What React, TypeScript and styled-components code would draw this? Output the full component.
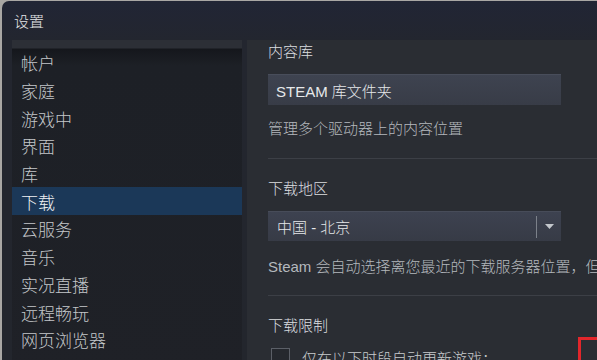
import React from "react";
import styled, { createGlobalStyle } from "styled-components";

const Global = createGlobalStyle`
  html, body { margin: 0; padding: 0; }
  body {
    width: 597px;
    height: 360px;
    overflow: hidden;
    background: #a9a7a4;
    font-family: "Liberation Sans", "Noto Sans CJK SC", sans-serif;
    font-weight: 300;
  }
`;

const Window = styled.div`
  position: relative;
  margin: 1px 0 0 2px;
  height: 359px;
  border-top-left-radius: 7px;
  overflow: hidden;
  background: linear-gradient(to bottom, #212535 0px, #23262f 40px, #23262d 100%);
  display: flex;
  flex-direction: column;
`;

const TitleBar = styled.div`
  height: 39px;
  flex: none;
  display: flex;
  align-items: center;
  padding-left: 12px;
  color: #e4e6e8;
  font-size: 15px;
`;

const Body = styled.div`
  flex: 1;
  display: grid;
  grid-template-columns: 230px 1fr;
  column-gap: 5px;
  padding-left: 10px;
  min-height: 0;
`;

const Sidebar = styled.nav`
  background: linear-gradient(
    to bottom,
    #2c2f36 0px,
    #2c2f36 8px,
    #15171c 9px,
    #1d2026 26px,
    #1f2127 100%
  );
  padding-top: 9px;
  display: flex;
  flex-direction: column;
`;

const NavItem = styled.div<{ $active?: boolean }>`
  height: 27.7px;
  flex: none;
  display: flex;
  align-items: center;
  padding-left: 9px;
  font-size: 17px;
  color: ${(p) => (p.$active ? "#f0f2f4" : "#c4c7ca")};
  background: ${(p) => (p.$active ? "#1b3858" : "transparent")};
  white-space: nowrap;
`;

const Content = styled.main`
  background: #2a2d33;
  padding: 2px 0 0 21px;
  display: flex;
  flex-direction: column;
  overflow: hidden;
`;

const Label = styled.div<{ $gap?: number }>`
  height: 20px;
  line-height: 20px;
  font-size: 15px;
  color: #dcdee0;
  margin-top: ${(p) => p.$gap ?? 0}px;
  white-space: nowrap;
`;

const Description = styled.div<{ $gap: number }>`
  height: 20px;
  line-height: 20px;
  font-size: 15px;
  color: #b4b8bd;
  margin-top: ${(p) => p.$gap}px;
  white-space: nowrap;
`;

const FieldButton = styled.div<{ $gap: number }>`
  margin-top: ${(p) => p.$gap}px;
  width: 293px;
  height: 31px;
  box-sizing: border-box;
  display: flex;
  align-items: center;
  padding-left: 8px;
  background: linear-gradient(to bottom, #3e4350 0, #383c47 100%);
  border-top: 1px solid #484d5a;
  color: #e6e8ea;
  font-size: 15px;
  white-space: nowrap;
`;

const Dropdown = styled.div<{ $gap: number }>`
  margin-top: ${(p) => p.$gap}px;
  width: 293px;
  height: 30px;
  box-sizing: border-box;
  display: flex;
  align-items: center;
  background: linear-gradient(to bottom, #3d4250 0, #373b46 100%);
  border-top: 1px solid #474c59;
  color: #e6e8ea;
  font-size: 15px;
`;

const DropdownText = styled.span`
  flex: 1;
  padding-left: 9px;
  white-space: nowrap;
`;

const DropdownSep = styled.span`
  width: 1px;
  height: 22px;
  background: #7c818a;
`;

const DropdownArrow = styled.span`
  width: 24px;
  display: flex;
  align-items: center;
  justify-content: center;
  padding-bottom: 1px;
`;

const Divider = styled.div<{ $gap: number }>`
  margin-top: ${(p) => p.$gap}px;
  height: 1px;
  flex: none;
  background: #3c3f46;
`;

const CheckRow = styled.div<{ $gap: number }>`
  margin-top: ${(p) => p.$gap}px;
  display: flex;
  align-items: flex-start;
  gap: 12px;
  padding-left: 3px;
  font-size: 15px;
  color: #c8cbce;
  white-space: nowrap;
`;

const CheckBox = styled.span`
  width: 19px;
  height: 19px;
  box-sizing: border-box;
  border: 1px solid #5b5f67;
  background: #25282e;
  flex: none;
`;

const CheckText = styled.span`
  line-height: 19px;
  padding-top: 1px;
`;

const Highlight = styled.div`
  position: absolute;
  left: 576px;
  top: 336px;
  width: 40px;
  height: 40px;
  border: 3px solid #e2262b;
  box-sizing: border-box;
`;

const navItems = [
  "帐户",
  "家庭",
  "游戏中",
  "界面",
  "库",
  "下载",
  "云服务",
  "音乐",
  "实况直播",
  "远程畅玩",
  "网页浏览器",
  "控制器",
];

export default function App() {
  return (
    <>
      <Global />
      <Window>
        <TitleBar>设置</TitleBar>
        <Body>
          <Sidebar>
            {navItems.map((n) => (
              <NavItem key={n} $active={n === "下载"}>
                {n}
              </NavItem>
            ))}
          </Sidebar>
          <Content>
            <Label>内容库</Label>
            <FieldButton $gap={12}>STEAM 库文件夹</FieldButton>
            <Description $gap={14}>管理多个驱动器上的内容位置</Description>
            <Divider $gap={19} />
            <Label $gap={20}>下载地区</Label>
            <Dropdown $gap={12}>
              <DropdownText>中国 - 北京</DropdownText>
              <DropdownSep />
              <DropdownArrow>
                <svg width="9" height="5" viewBox="0 0 9 5">
                  <path d="M0 0 H9 L4.5 5 Z" fill="#c3c7cc" />
                </svg>
              </DropdownArrow>
            </Dropdown>
            <Description $gap={16}>
              Steam 会自动选择离您最近的下载服务器位置，但您可以选择其他位置
            </Description>
            <Divider $gap={18} />
            <Label $gap={20}>下载限制</Label>
            <CheckRow $gap={12}>
              <CheckBox />
              <CheckText>仅在以下时段自动更新游戏：</CheckText>
            </CheckRow>
          </Content>
        </Body>
        <Highlight />
      </Window>
    </>
  );
}
